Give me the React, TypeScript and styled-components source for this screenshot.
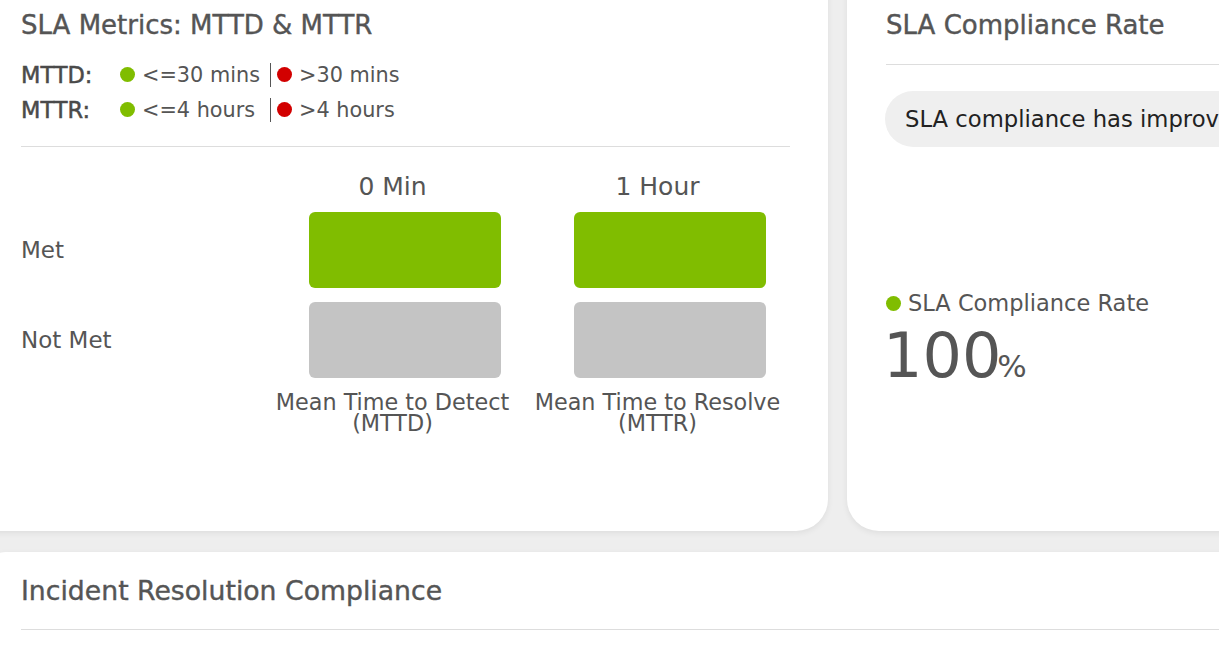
import React from "react";
import styled, { createGlobalStyle } from "styled-components";

const GREEN = "#80bd00";
const RED = "#d20000";
const TEXT = "#555555";

const GlobalStyle = createGlobalStyle`
  html, body {
    margin: 0;
    padding: 0;
    background: #eeeeee;
    overflow: hidden;
    font-family: "DejaVu Sans", "Noto Sans", sans-serif;
    color: ${TEXT};
  }
`;

type Option = { color: string; text: string };

const legend: { label: string; options: Option[] }[] = [
  {
    label: "MTTD:",
    options: [
      { color: GREEN, text: "<=30 mins" },
      { color: RED, text: ">30 mins" },
    ],
  },
  {
    label: "MTTR:",
    options: [
      { color: GREEN, text: "<=4 hours" },
      { color: RED, text: ">4 hours" },
    ],
  },
];

const metrics = [
  { value: "0 Min", name: "Mean Time to Detect", short: "(MTTD)", met: true },
  { value: "1 Hour", name: "Mean Time to Resolve", short: "(MTTR)", met: true },
];

const App = () => {
  return (
    <>
      <GlobalStyle />
      <Page>
        <MetricsCard>
          <CardTitle>SLA Metrics: MTTD &amp; MTTR</CardTitle>
          <Legend>
            {legend.map((row) => (
              <LegendRow key={row.label}>
                <LegendLabel>{row.label}</LegendLabel>
                <LegendOption fixed>
                  <Dot color={row.options[0].color} />
                  {row.options[0].text}
                </LegendOption>
                <Separator />
                <LegendOption>
                  <Dot color={row.options[1].color} />
                  {row.options[1].text}
                </LegendOption>
              </LegendRow>
            ))}
          </Legend>
          <Divider gap={19} />
          <Chart>
            <span />
            {metrics.map((m) => (
              <ColumnHeader key={m.value}>{m.value}</ColumnHeader>
            ))}
            <RowLabel>Met</RowLabel>
            {metrics.map((m) => (
              <Block key={m.value} filled={m.met} />
            ))}
            <RowLabel>Not Met</RowLabel>
            {metrics.map((m) => (
              <Block key={m.value} filled={!m.met} />
            ))}
            <span />
            {metrics.map((m) => (
              <ColumnFooter key={m.value}>
                <FooterLine>{m.name}</FooterLine>
                <FooterLine>{m.short}</FooterLine>
              </ColumnFooter>
            ))}
          </Chart>
        </MetricsCard>

        <RateCard>
          <CardTitle>SLA Compliance Rate</CardTitle>
          <Divider gap={23} />
          <Pill>SLA compliance has improved by 0% compared to the previous period</Pill>
          <RateBody>
            <RateLabel>
              <Dot color={GREEN} />
              SLA Compliance Rate
            </RateLabel>
            <RateValue>
              100<Percent>%</Percent>
            </RateValue>
          </RateBody>
        </RateCard>

        <WideCard>
          <WideTitle>Incident Resolution Compliance</WideTitle>
          <Divider gap={23} />
        </WideCard>
      </Page>
    </>
  );
};

export default App;

const Page = styled.div`
  display: grid;
  grid-template-columns: 844px 417px;
  grid-template-rows: 555px 120px;
  gap: 21px 19px;
  margin: -24px 0 0 -16px;
  width: 1280px;
`;

const Card = styled.section`
  background: #ffffff;
  box-shadow: 0 2px 6px rgba(0, 0, 0, 0.07);
  display: flex;
  flex-direction: column;
  overflow: hidden;
`;

const MetricsCard = styled(Card)`
  border-radius: 0 0 32px 0;
  padding: 34px 38px 0 37px;
`;

const RateCard = styled(Card)`
  border-radius: 0 0 0 32px;
  padding: 34px 0 0 39px;
`;

const WideCard = styled(Card)`
  grid-column: 1 / 3;
  border-radius: 22px 0 0 0;
  padding: 23px 0 0 37px;
`;

const CardTitle = styled.h2`
  margin: 0;
  font-size: 26px;
  line-height: 31px;
  font-weight: 400;
  -webkit-text-stroke: 0.4px currentColor;
  color: ${TEXT};
  white-space: nowrap;
`;

const WideTitle = styled(CardTitle)`
  font-size: 26.7px;
`;

const Legend = styled.div`
  margin-top: 16px;
  display: flex;
  flex-direction: column;
`;

const LegendRow = styled.div`
  display: flex;
  align-items: center;
  height: 35px;
  font-size: 20.8px;
  color: ${TEXT};
`;

const LegendLabel = styled.span`
  width: 99px;
  font-size: 22.5px;
  -webkit-text-stroke: 0.5px currentColor;
  color: #4a4a4a;
`;

const LegendOption = styled.span<{ fixed?: boolean }>`
  display: flex;
  align-items: center;
  gap: 7px;
  width: ${({ fixed }) => (fixed ? "150px" : "auto")};
  white-space: nowrap;
`;

const Separator = styled.span`
  width: 1px;
  height: 24px;
  background: #555;
  margin-right: 6px;
`;

const Dot = styled.span<{ color: string }>`
  display: inline-block;
  flex: none;
  width: 15px;
  height: 15px;
  border-radius: 50%;
  background: ${({ color }) => color};
`;

const Divider = styled.hr<{ gap: number }>`
  border: none;
  border-top: 1px solid #dddddd;
  margin: ${({ gap }) => gap}px 0 0;
  width: 100%;
`;

const Chart = styled.div`
  display: grid;
  grid-template-columns: 239px 265px 265px;
  grid-template-rows: 25px 76px 76px auto;
  row-gap: 14px;
  margin-top: 26px;
`;

const ColumnHeader = styled.div`
  text-align: center;
  font-size: 25px;
  line-height: 28px;
  color: ${TEXT};
`;

const RowLabel = styled.div`
  align-self: center;
  font-size: 23px;
  color: ${TEXT};
`;

const Block = styled.div<{ filled: boolean }>`
  margin-left: 49px;
  width: 192px;
  border-radius: 6px;
  background: ${({ filled }) => (filled ? GREEN : "#c4c4c4")};
`;

const ColumnFooter = styled.div`
  display: flex;
  flex-direction: column;
  align-items: center;
  font-size: 22.3px;
  color: ${TEXT};
  white-space: nowrap;
`;

const FooterLine = styled.span`
  line-height: 21px;
  height: 21px;
`;

const Pill = styled.div`
  margin-top: 26px;
  height: 56px;
  display: flex;
  align-items: center;
  padding: 0 20px;
  border-radius: 28px;
  background: #efefef;
  color: #222;
  font-size: 22.7px;
  white-space: nowrap;
  width: max-content;
  margin-left: -1px;
`;

const RateBody = styled.div`
  flex: 1;
  display: flex;
  flex-direction: column;
  justify-content: center;
  padding-top: 10px;
`;

const RateLabel = styled.div`
  display: flex;
  align-items: center;
  gap: 7px;
  font-size: 22.5px;
  line-height: 28px;
  color: ${TEXT};
`;

const RateValue = styled.div`
  margin-top: 6px;
  font-size: 62px;
  line-height: 66px;
  color: ${TEXT};
  margin-left: -3px;
`;

const Percent = styled.span`
  font-size: 31px;
  margin-left: -4px;
`;
